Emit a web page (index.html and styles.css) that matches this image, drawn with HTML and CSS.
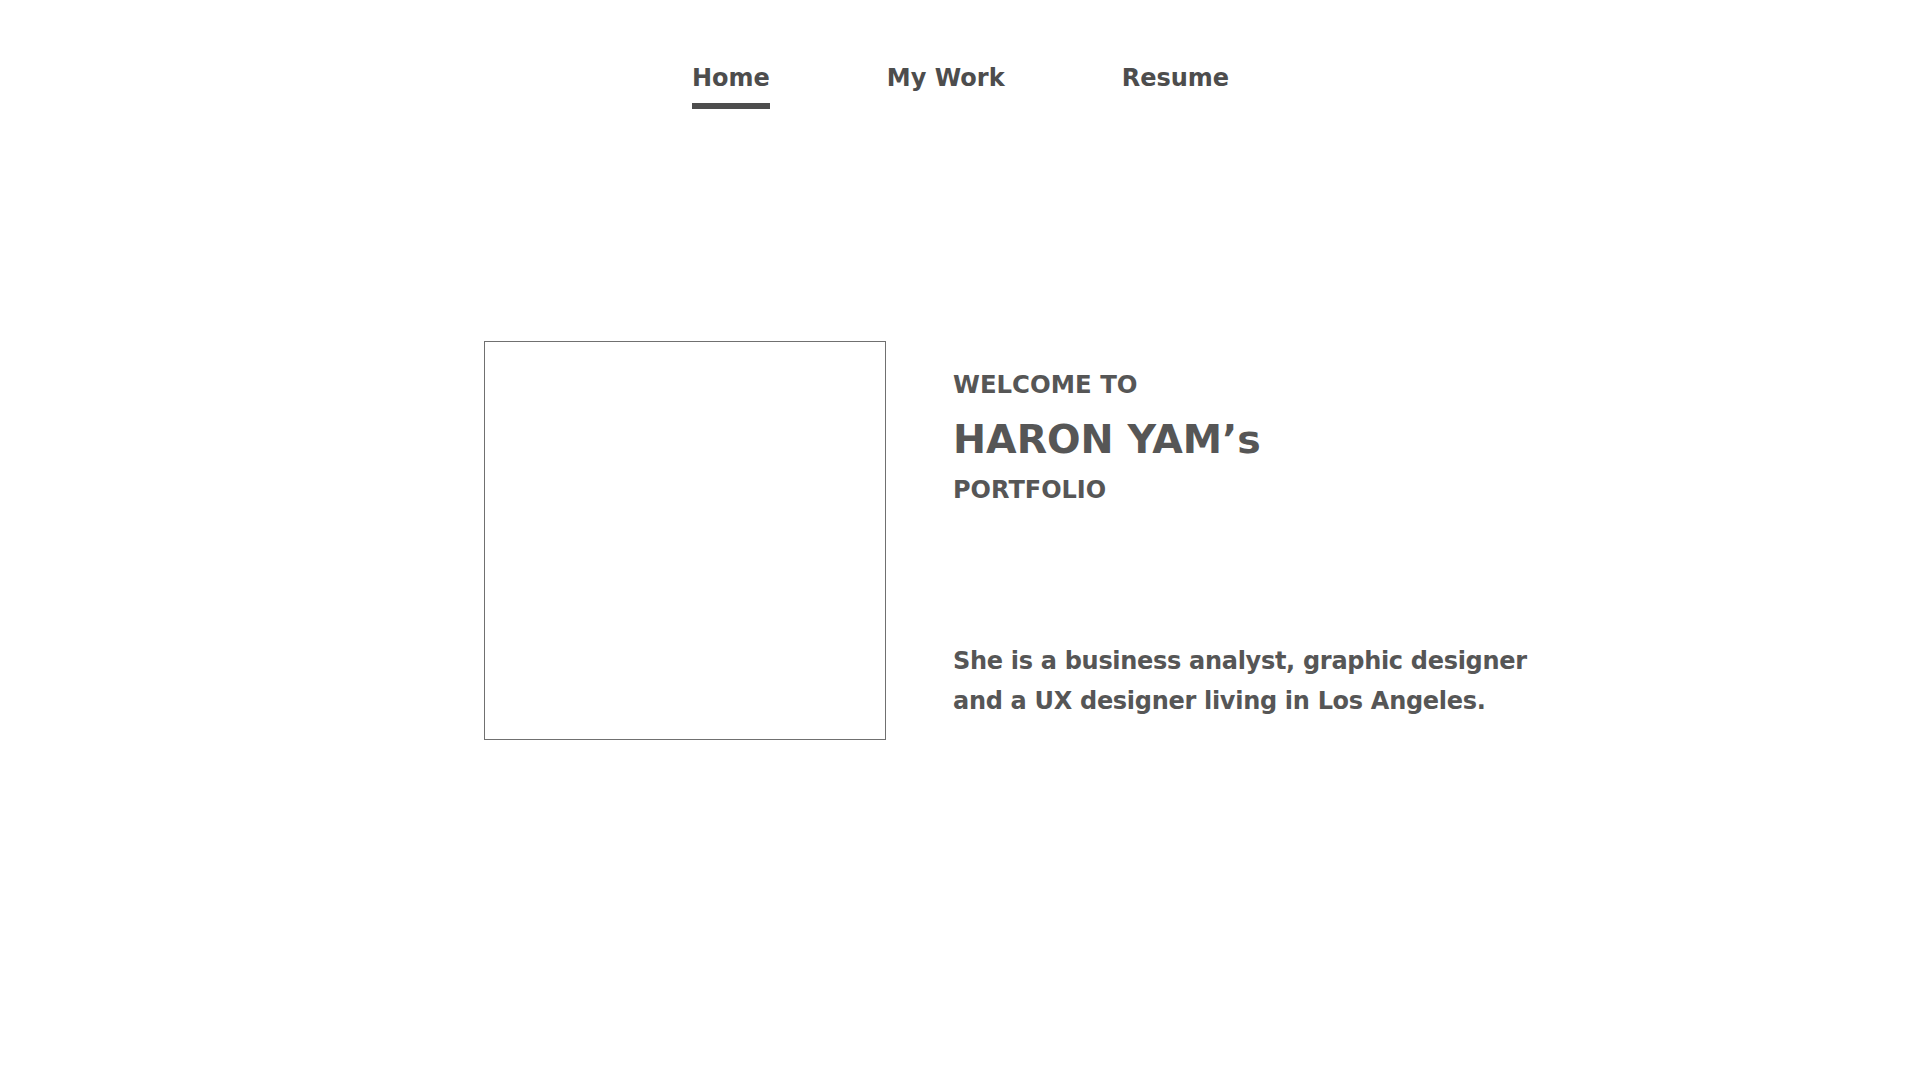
FILE: index.html
```html
<!DOCTYPE html>
<html lang="en">
<head>
<meta charset="utf-8">
<title>Haron Yam Portfolio</title>
<link rel="stylesheet" href="styles.css">
</head>
<body>
<div class="page">
  <nav class="nav">
    <a class="nav-item active" href="#">Home</a>
    <a class="nav-item" href="#">My Work</a>
    <a class="nav-item" href="#">Resume</a>
  </nav>
  <main class="hero">
    <div class="photo"></div>
    <div class="intro">
      <div class="welcome">WELCOME TO</div>
      <h1 class="name">HARON YAM’s</h1>
      <div class="portfolio">PORTFOLIO</div>
      <p class="bio">She is a business analyst, graphic designer and a UX designer living in Los Angeles.</p>
    </div>
  </main>
</div>
</body>
</html>
```
FILE: styles.css
```css
html, body {
  margin: 0;
  padding: 0;
  background: #ffffff;
}
body {
  font-family: "DejaVu Sans", "Liberation Sans", sans-serif;
  font-weight: 700;
  color: #565656;
}
.page {
  width: 952px;
  margin: 0 auto;
}
.nav {
  display: flex;
  align-items: flex-start;
  gap: 117px;
  padding-left: 208px;
  padding-top: 64px;
}
.nav-item {
  font-size: 24px;
  font-weight: 700;
  color: #4d4d4d;
  text-decoration: none;
  line-height: 28px;
  padding-bottom: 11px;
  border-bottom: 6px solid transparent;
}
.nav-item.active {
  border-bottom-color: #4d4d4d;
}
.hero {
  display: flex;
  gap: 67px;
  margin-top: 232px;
}
.photo {
  box-sizing: border-box;
  width: 402px;
  height: 399px;
  border: 1px solid #707070;
  flex: none;
}
.intro {
  flex: none;
  width: 600px;
  padding-top: 29px;
}
.welcome {
  font-size: 24.4px;
  line-height: 30px;
}
.name {
  margin: 15px 0 0;
  font-size: 39.5px;
  font-weight: 700;
  line-height: 48px;
}
.portfolio {
  margin-top: 12px;
  font-size: 24px;
  line-height: 30px;
}
.bio {
  margin: 136px 0 0;
  font-size: 24px;
  line-height: 40px;
  letter-spacing: -0.3px;
}
```
